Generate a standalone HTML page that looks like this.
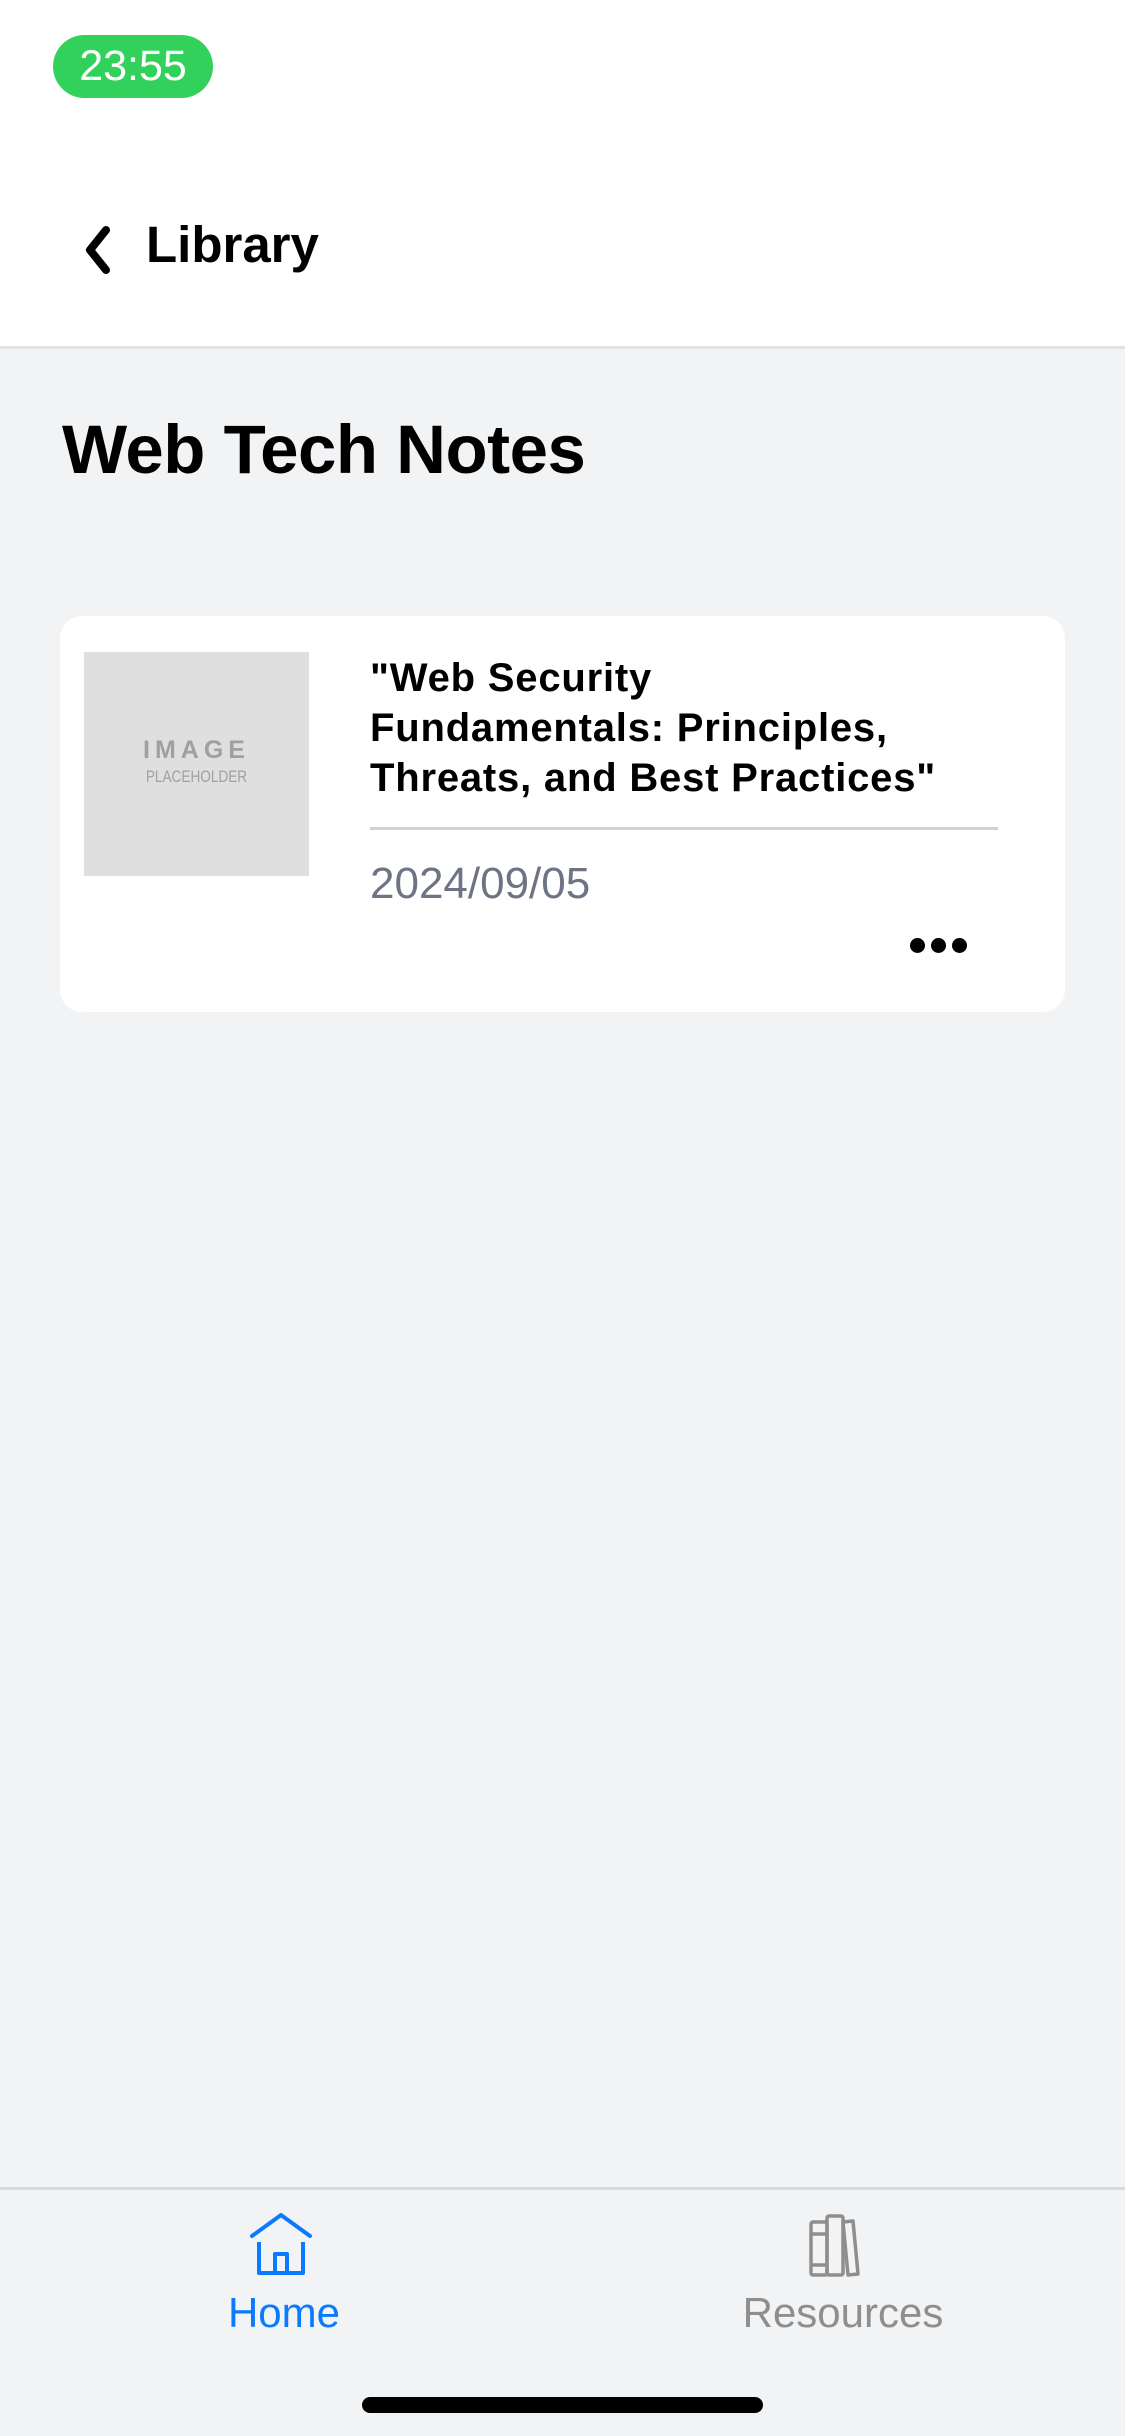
<!DOCTYPE html>
<html><head><meta charset="utf-8"><style>
*{margin:0;padding:0;box-sizing:border-box}
body{width:1125px;height:2436px;background:#f2f3f5;font-family:"Liberation Sans",sans-serif;position:relative;overflow:hidden}
.hdr{position:absolute;left:0;top:0;width:1125px;height:349px;background:#fff;border-bottom:3px solid #e2e3e7}
.pill{position:absolute;left:53px;top:35px;width:160px;height:63px;border-radius:32px;background:#32d15b;color:#fff;font-size:43px;line-height:63px;text-align:center}
.lib{position:absolute;left:146px;top:215px;font-size:51px;font-weight:bold;color:#000}
h1{position:absolute;left:62px;top:410px;font-size:69px;font-weight:bold;color:#000;letter-spacing:-0.5px}
.card{position:absolute;left:60px;top:616px;width:1005px;height:396px;background:#fff;border-radius:22px}
.img{position:absolute;left:24px;top:36px;width:225px;height:224px;background:#dfdfdf;text-align:center;color:#a0a0a0}
.t{position:absolute;left:310px;top:37px;font-size:40px;line-height:50px;font-weight:bold;color:#000;width:700px;letter-spacing:0.8px}
.div{position:absolute;left:310px;top:211px;width:628px;height:3px;background:#d0d2d6}
.date{position:absolute;left:310px;top:243px;font-size:44px;color:#6f7485}
.dots{position:absolute;left:850px;top:322px}
.dots i{display:inline-block;width:15px;height:15px;border-radius:50%;background:#000;margin-right:6px}
.tab{position:absolute;left:0;top:2187px;width:1125px;height:249px;border-top:3px solid #d9dadd;background:#f2f3f5}
.lbl{position:absolute;top:2289px;font-size:42px;width:400px;text-align:center}
.ind{position:absolute;left:362px;top:2397px;width:401px;height:16px;border-radius:8px;background:#000}
</style></head><body>
<div class="hdr"></div>
<div class="pill">23:55</div>
<svg style="position:absolute;left:80px;top:222px" width="40" height="56" viewBox="0 0 40 56"><path d="M26 8 L10 28 L26 48" fill="none" stroke="#000" stroke-width="8" stroke-linecap="round" stroke-linejoin="round"/></svg>
<div class="lib">Library</div>
<h1>Web Tech Notes</h1>
<div class="card">
 <div class="img"><div style="margin-top:84px;font-size:25px;font-weight:bold;letter-spacing:5px">IMAGE</div><div style="font-size:17px;margin-top:2px;transform:scaleX(.8)">PLACEHOLDER</div></div>
 <div class="t">"Web Security<br>Fundamentals: Principles,<br>Threats, and Best Practices"</div>
 <div class="div"></div>
 <div class="date">2024/09/05</div>
 <div class="dots"><i></i><i></i><i></i></div>
</div>
<div class="tab"></div>
<svg style="position:absolute;left:248px;top:2210px" width="66" height="70" viewBox="0 0 66 70"><path d="M4 26 L33 5 L62 26" fill="none" stroke="#0a7aff" stroke-width="4" stroke-linecap="round" stroke-linejoin="round"/><path d="M11 32 V63 H55 V32 M27 63 V44 H39 V63" fill="none" stroke="#0a7aff" stroke-width="4" stroke-linejoin="round"/></svg>
<svg style="position:absolute;left:808px;top:2212px" width="70" height="66" viewBox="0 0 70 66"><g fill="none" stroke="#8e8e8e" stroke-width="3.5" stroke-linejoin="round"><rect x="3" y="10" width="16" height="53" rx="2"/><rect x="19" y="4" width="16" height="59" rx="2"/><path d="M35 10 L45 9 L50 62 L40 63 Z"/><path d="M3 22 H19 M3 53 H19"/></g></svg>
<div class="lbl" style="left:84px;color:#0a7aff">Home</div>
<div class="lbl" style="left:643px;color:#8e8e8e">Resources</div>
<div class="ind"></div>
</body></html>
